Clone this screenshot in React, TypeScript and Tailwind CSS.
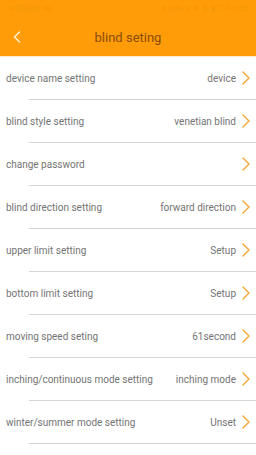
import React from "react";

const rows = [
  { label: "device name setting", value: "device" },
  { label: "blind style setting", value: "venetian blind" },
  { label: "change password", value: "" },
  { label: "blind direction setting", value: "forward direction" },
  { label: "upper limit setting", value: "Setup" },
  { label: "bottom limit setting", value: "Setup" },
  { label: "moving speed seting", value: "61second" },
  { label: "inching/continuous mode setting", value: "inching mode" },
  { label: "winter/summer mode setting", value: "Unset" },
];

function Chevron() {
  return (
    <svg width="8" height="14" viewBox="0 0 8 14" fill="none" className="shrink-0">
      <path d="M1 1 L7 7 L1 13" stroke="#f2a531" strokeWidth="1.4" strokeLinecap="round" strokeLinejoin="round" />
    </svg>
  );
}

export default function App() {
  return (
    <div className="w-[256px] h-[455px] bg-white overflow-hidden" style={{ fontFamily: "Roboto, 'Noto Sans', sans-serif" }}>
      {/* header */}
      <div className="bg-[#ff9c08] h-[56px] flex flex-col">
        <div className="h-[18px] flex items-center justify-between px-[8px] text-[8px] text-[#f59707]">
          <span>中国移动 4G</span>
          <span>0.00K/s ✈ 令 ▮ 下午2:25</span>
        </div>
        <div className="relative flex-1 flex items-center justify-center">
          <svg width="8" height="12" viewBox="0 0 8 12" fill="none" className="absolute left-[13px] top-[13px]">
            <path d="M6.5 1 L1.5 6 L6.5 11" stroke="#fff4dc" strokeWidth="1.4" strokeLinecap="round" strokeLinejoin="round" />
          </svg>
          <span className="text-[13px] text-[#8a4c0c] mt-[1px]">blind seting</span>
        </div>
      </div>
      <div className="h-[1px] bg-[#fbe9c8]" />
      {/* list */}
      <div className="flex flex-col">
        {rows.map((r, i) => (
          <div key={i} className="flex flex-col">
            <div className="h-[42px] flex items-center justify-between pl-[6px] pr-[6px] text-[10px] text-[#747474]">
              <span>{r.label}</span>
              <div className="flex items-center gap-[6px]">
                <span>{r.value}</span>
                <Chevron />
              </div>
            </div>
            <div className="ml-[29px] h-[1px] bg-[#d6d6d6]" />
          </div>
        ))}
      </div>
    </div>
  );
}
